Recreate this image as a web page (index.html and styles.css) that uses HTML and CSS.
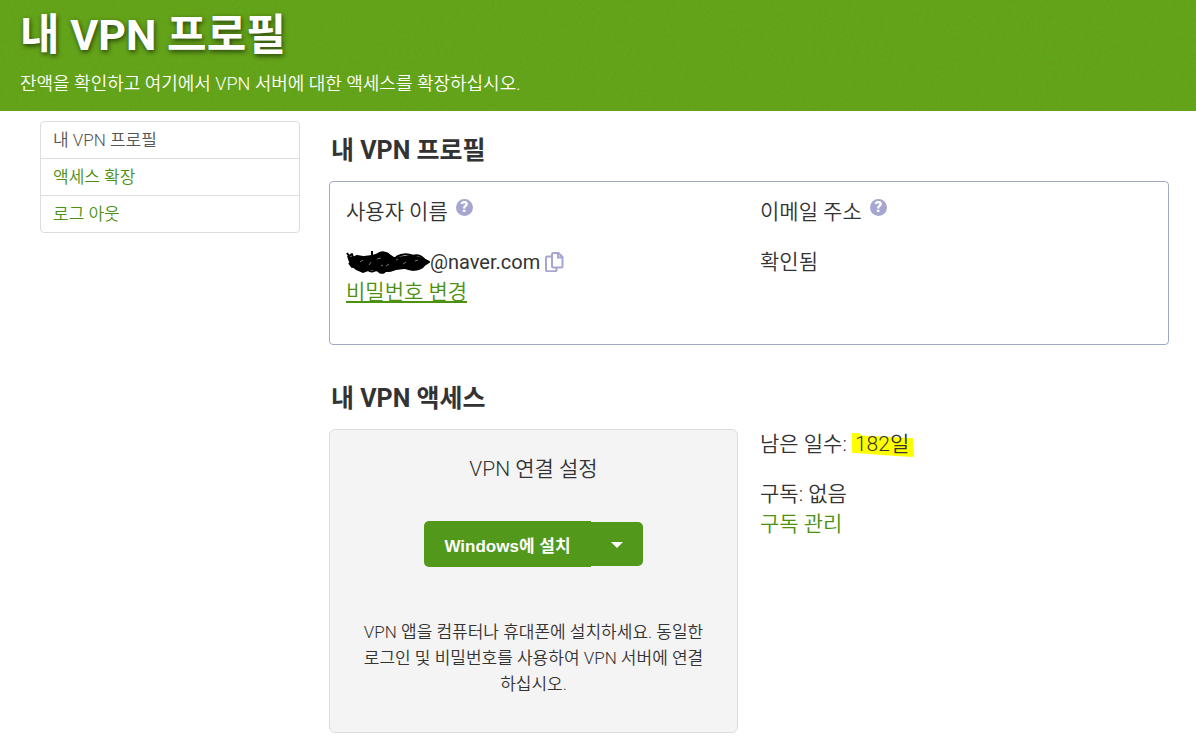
FILE: index.html
```html
<!DOCTYPE html>
<html lang="ko">
  <head>
    <meta charset="UTF-8" />
    <meta name="viewport" content="width=device-width, initial-scale=1.0" />
    <title>내 VPN 프로필</title>
    <link rel="stylesheet" href="styles.css">
  </head>
  <body>
    <header class="hero">
      <svg class="hero-grain" aria-hidden="true">
        <filter id="grain" x="0" y="0" width="100%" height="100%">
          <feTurbulence type="fractalNoise" baseFrequency="0.37" numOctaves="3" seed="4" />
          <feColorMatrix values="0 0 0 0 0.15  0 0 0 0 0.3  0 0 0 0 0  0.7 0 0 0 -0.28" />
        </filter>
        <rect width="100%" height="100%" filter="url(#grain)" />
      </svg>
      <h1>내 VPN 프로필</h1>
      <p>잔액을 확인하고 여기에서 VPN 서버에 대한 액세스를 확장하십시오.</p>
    </header>
    <div class="layout">
      <nav class="side-nav">
        <a class="active" href="#profile">내 VPN 프로필</a>
        <a href="#extend">액세스 확장</a>
        <a href="#logout">로그 아웃</a>
      </nav>
      <main>
        <h2>내 VPN 프로필</h2>
        <section class="profile" id="profile">
          <div>
            <div class="label">사용자 이름
              <button class="help" type="button" aria-label="사용자 이름 도움말">?</button>
            </div>
            <div class="user">
              <!-- Hidden part of the address -->
              <svg class="scribble" width="84" height="24" viewBox="0 0 84 24" role="img" aria-label="가려진 이름">
                <path d="M1 6l9 1 8-1 8-1 7-2 9 0 6 4 10-1 8-1 8 2 9 4-6 6-9 3-10-1-8 1-9 2-8 0-8-2-8 3-7-3-6-5z" />
                <path class="stroke" d="M1 3l2 3 3-2 1 4 4-2 6 1M3 13l3 4 4-2 3 5 4-3 5 3M26 7V1M30 6c4-5 12-5 14 1M20 18c5 6 10 3 12 0M32 18c0 6 6 6 8 2 4 3 8-1 12-2M50 7c7-4 12-3 18-1M66 6c8-2 10 1 13 4l4 2-6 4M58 17c6 4 14 4 20-1" />
                <path class="gap" d="M14 12l3-2M23 15l2-3M31 9l4-1M40 16l3-2M57 14l3-2M69 11l3-1M35 15l2 1M50 10l2-1" />
              </svg>
              <span class="mail">@naver.com</span>
              <button class="copy" type="button" aria-label="복사">
                <svg width="19" height="20" viewBox="0 0 19 20">
                  <path d="M7 4.500H2.500Q1 4.500 1 6v12q0 1.300 1.500 1.300h7.500q1.500 0 1.500-1.300v-2.500M8.500 1H13.500L17.500 5v9q0 1.500-1.500 1.500H8.500Q7 15.500 7 14V2.500Q7 1 8.500 1zM13 1v4.500h4.500" />
                </svg>
              </button>
            </div>
            <a class="password" href="#password">비밀번호 변경</a>
          </div>
          <div>
            <div class="label">이메일 주소
              <button class="help" type="button" aria-label="이메일 주소 도움말">?</button>
            </div>
            <div>확인됨</div>
          </div>
        </section>
        <h2>내 VPN 액세스</h2>
        <section class="access">
          <div class="setup">
            <h3>VPN 연결 설정</h3>
            <div class="install">
              <button class="install-btn" type="button">Windows에 설치</button>
              <button class="install-menu" type="button" aria-label="다른 플랫폼">
                <svg width="12" height="6" viewBox="0 0 12 6"><path d="M0 0h12L6 6z" /></svg>
              </button>
            </div>
            <p>VPN 앱을 컴퓨터나 휴대폰에 설치하세요. 동일한 로그인 및 비밀번호를 사용하여 VPN 서버에 연결하십시오.</p>
          </div>
          <div class="plan">
            <p>남은 일수: <span class="days">182일</span></p>
            <p>구독: 없음<br><a href="#subscription">구독 관리</a></p>
          </div>
        </section>
      </main>
    </div>
  </body>
</html>
```
FILE: styles.css
```css
:root {
  --green: #51981b;
  --hero-green: #62a41b;
  --link: #4c9112;
  --lilac: #a6a6d0;
  --text: #333;
}
* { box-sizing: border-box; }
body {
  margin: 0;
  background: #fff;
  color: var(--text);
  font-family: Roboto, "Noto Sans CJK KR", sans-serif;
  font-size: 21px;
  font-weight: 350;
  line-height: 30px;
}
h1, h2, h3, p { margin: 0; }
a { color: var(--link); text-decoration: none; }
button { border: 0; padding: 0; cursor: pointer; font-family: inherit; }
.hero {
  position: relative;
  background: var(--hero-green);
  color: #fff;
  padding: 9px 20px 12px;
}
.hero-grain { position: absolute; top: 0; left: 0; width: 100%; height: 100%; }
.hero h1 {
  position: relative;
  font-size: 43px;
  line-height: 52px;
  font-weight: 700;
  text-shadow: 1px 2px 5px rgba(0, 0, 0, 0.6);
}
.hero p { position: relative; margin-top: 8px; font-size: 18px; }
.layout {
  display: grid;
  grid-template-columns: 260px 1fr;
  gap: 29px;
  padding: 10px 27px 19px 40px;
}
.side-nav {
  align-self: start;
  border: 1px solid #ddd;
  border-radius: 4px;
  font-size: 17px;
  line-height: 24px;
}
.side-nav a { display: block; padding: 6px 12px; }
.side-nav a + a { border-top: 1px solid #ddd; }
.side-nav .active { color: #555; }
h2 {
  margin: 0 2px 14px;
  padding-top: 14px;
  font-size: 25px;
  font-weight: 700;
  line-height: 32px;
}
.profile, .access { display: grid; grid-template-columns: 1fr 1fr; gap: 22px; }
.profile {
  margin-bottom: 24px;
  padding: 15px 16px 37px;
  border: 1px solid #9faac4;
  border-radius: 4px;
}
.label { display: flex; gap: 8px; margin-bottom: 20px; }
.help {
  width: 17px;
  height: 17px;
  margin-top: 2px;
  border-radius: 50%;
  background: var(--lilac);
  color: #fff;
  font-size: 15px;
  font-weight: 900;
  line-height: 17px;
}
.user { display: flex; align-items: center; }
.scribble path { fill: #000; }
.scribble .stroke { fill: none; stroke: #000; stroke-width: 2; stroke-linejoin: round; }
.scribble .gap { fill: none; stroke: #777; stroke-width: 1; }
.mail { font-size: 20px; font-weight: 400; }
.copy { height: 20px; margin-left: 5px; background: none; }
.copy svg { display: block; fill: none; stroke: var(--lilac); stroke-width: 2; }
.password { text-decoration: underline; }
.setup {
  padding: 24px 28px 35px;
  border: 1px solid #ddd;
  border-radius: 6px;
  background: #f4f4f4;
  text-align: center;
}
.setup h3 { font-size: 21px; font-weight: 350; line-height: 30px; }
.install {
  display: flex;
  justify-content: center;
  align-items: center;
  margin: 37px 0 52px;
}
.install button { background: var(--green); color: #fff; }
.install .install-btn {
  height: 46px;
  padding: 0 20px;
  border-radius: 5px 0 0 5px;
  font-family: "Liberation Sans", "Noto Sans CJK KR", sans-serif;
  font-size: 17px;
  font-weight: 700;
}
.install .install-menu { width: 52px; height: 44px; border-radius: 0 5px 5px 0; }
.install-menu svg { fill: #fff; vertical-align: middle; }
.setup p { font-size: 17px; line-height: 26px; }
.plan p { margin-bottom: 20px; }
.days { position: relative; padding: 0 5px 0 3px; }
/* Marker stroke behind the number */
.days::before {
  content: "";
  position: absolute;
  inset: 1px 0 -1px;
  z-index: -1;
  background: #ff0;
  clip-path: polygon(0 0, 12% 0, 15% 10%, 98% 22%, 100% 100%, 70% 96%, 0 82%);
}
```
